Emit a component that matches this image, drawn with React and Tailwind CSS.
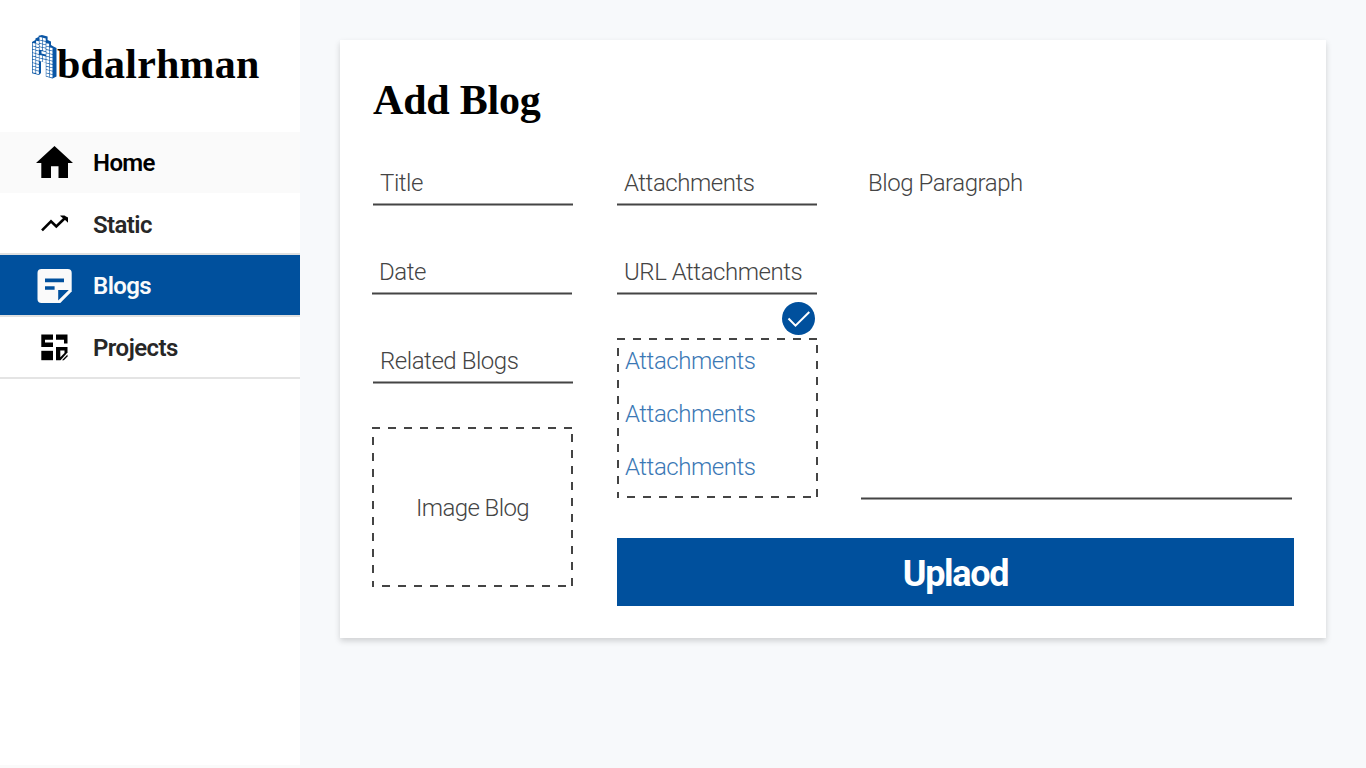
const LOGO_COLUMNS = [
  { x: 0.7, y: 8, rows: 9 },
  { x: 4.1, y: 5.7, rows: 10 },
  { x: 7.5, y: 2.0, rows: 4 },
  { x: 7.5, y: 20, rows: 2 },
  { x: 10.9, y: 2.8, rows: 4 },
  { x: 10.9, y: 20.8, rows: 2 },
  { x: 14.3, y: 8.2, rows: 10 },
  { x: 17.7, y: 12.4, rows: 9 },
];

function Logo() {
  return (
    <svg width="25" height="45" viewBox="0 0 25 45" fill="none">
      <path d="M0 7 3.400 5V3.400L6.600 2V.8L10 0 15.600 1.600V5L19 6.600V10L21 11.200 24.500 13V41.500L20.500 43.500 13.800 41.500V27.500L9 26.400V38L7 40 0 38.300Z" fill="#0a56a5" />
      <path d="M9.500 16 13.800 17V19.600L9.500 18.500Z" fill="#fff" />
      {LOGO_COLUMNS.map((c, i) =>
        Array.from({ length: c.rows }, (_, r) => (
          <path key={`${i}-${r}`} d={`M${c.x} ${c.y + r * 3.35}l2.800 .6v2.700l-2.800-.6z`} fill="#fff" />
        ))
      )}
    </svg>
  );
}

function HomeIcon() {
  return (
    <svg width="40" height="41" viewBox="35 142 40 41" fill="#000">
      <path d="M54.500 146 73 163H68V178H58.500V166.300H51V178H41.300V163H36Z" />
    </svg>
  );
}

function TrendIcon() {
  return (
    <svg width="40" height="40" viewBox="35 203 40 40" fill="none">
      <path d="M42 230.300 51 221.300 56.300 226.500 65 218" stroke="#000" strokeWidth="2.600" />
      <path d="M60.300 215.500H64.500L66 216.600 68 217.500V222.800L66.500 221.300 60.300 215.900Z" fill="#000" />
    </svg>
  );
}

function NoteIcon() {
  return (
    <svg width="40" height="40" viewBox="35 265 40 40" fill="none">
      <path d="M41.500 269H67.700a4 4 0 0 1 4 4V291.500L60.300 302.900H41.500a4 4 0 0 1-4-4V273a4 4 0 0 1 4-4Z" fill="#fafafa" />
      <path d="M45 278.500H64V282.200H45ZM45 286.200H54.600V289.800H45ZM58.200 290H68.800L58.200 300.600Z" fill="#00509d" />
    </svg>
  );
}

function ProjectsIcon() {
  return (
    <svg width="40" height="40" viewBox="35 327 40 40" fill="#000">
      <path d="M41.300 334.600H53V339.800H45V342.400H53V347H41.300Z" />
      <path d="M56 334.600H67.500V343.500H64V339.700H56Z" />
      <path d="M41.300 350.800H53V360.200H41.300Z" />
      <path d="M56 347H67.500V352.500L60.500 360.200H56Z" />
      <path d="M60.300 350.500H64.500V353L60.300 357.300Z" fill="#fff" />
      <path d="M62 360.200 67.500 354.600V356.500L63.800 360.200Z" />
    </svg>
  );
}

function Dashes() {
  return (
    <svg className="absolute inset-0" width="201" height="160" stroke="#444" strokeWidth="2" strokeDasharray="8 8">
      <path d="M0 1H200M200 7V159M10 159H200M1 10V160" />
    </svg>
  );
}

function Line({ className }) {
  return <div className={`h-[3px] border-y border-[#a0a0a0] bg-[#444] ${className}`} />;
}

function Field({ children, className = "" }) {
  return (
    <div className={`w-[200px] ${className}`}>
      <div className="flex h-[42px] items-center pl-[7px] pt-[2px]">{children}</div>
      <Line className="w-[200px]" />
    </div>
  );
}

function NavItem({ icon, label, className, labelClass = "" }) {
  return (
    <a className={`flex items-center pl-[35px] text-2xl font-semibold ${className}`}>
      <span className="flex w-[58px] shrink-0">{icon}</span>
      <span className={labelClass}>{label}</span>
    </a>
  );
}

export default function App() {
  return (
    <div className="h-[768px] w-[1366px] overflow-hidden bg-[#f7f9fb] font-['Roboto',sans-serif] text-[#444]">
      <div className="flex">
        <div className="h-[768px] w-[300px] shrink-0 bg-[#fafafa]">
          <aside className="h-[765px] bg-white text-[#272727]">
            <div className="flex h-[132px] pl-[32px] pt-[35px] text-black">
              <Logo />
              <span className="pt-[5px] font-['Liberation_Serif',serif] text-[42px] font-bold leading-[48px] tracking-[0.2px]">bdalrhman</span>
            </div>
            <NavItem label="Home" className="h-[61px] bg-[#fafafa] text-black" labelClass="tracking-[-0.6px]" icon={<HomeIcon />} />
            <NavItem label="Static" className="h-[62px] border-b-2 border-[#e0e0e0]" labelClass="pt-1 tracking-[-0.6px]" icon={<TrendIcon />} />
            <NavItem label="Blogs" className="h-[60px] bg-[#00509d] text-[#fafafa]" labelClass="pt-0.5 tracking-[-0.6px]" icon={<NoteIcon />} />
            <div className="h-[2px] bg-[#e0e0e0]" />
            <NavItem label="Projects" className="h-[62px] border-b-2 border-[#e4e4e4]" labelClass="pt-0.5 tracking-[-0.55px]" icon={<ProjectsIcon />} />
          </aside>
        </div>
        <main className="p-10">
          <section className="h-[598px] w-[986px] bg-white pl-8 pt-8 shadow-[0_3px_6px_rgba(0,0,0,0.16)]">
            <h1 className="h-[56px] pl-px font-['Liberation_Serif',serif] text-[42px] font-bold leading-[57px] tracking-[-0.2px] text-black">Add Blog</h1>
            <div className="flex gap-11 pt-[33px] text-2xl font-[350] tracking-[-0.45px]">
              <div className="flex w-[201px] flex-col gap-[44px]">
                <Field className="ml-px">Title</Field>
                <Field>Date</Field>
                <Field className="ml-px">Related Blogs</Field>
                <div className="relative -mt-px flex h-[160px] items-center justify-center pt-[2px] tracking-[-0.6px]">
                  <Dashes />
                  Image Blog
                </div>
              </div>
              <div className="w-[677px]">
                <div className="flex gap-[43px]">
                  <div className="w-[201px]">
                    <Field>Attachments</Field>
                    <Field className="mt-[44px]">URL Attachments</Field>
                    <div className="flex h-[43px] justify-end pr-[3px] pt-[7px]">
                      <svg width="33" height="33" viewBox="0 0 33 33" fill="none">
                        <circle cx="16.500" cy="16.500" r="16.500" fill="#00509d" />
                        <path d="M6.500 16.500 13.500 23.700 27.300 10" stroke="#fff" strokeWidth="2" />
                      </svg>
                    </div>
                    <div className="relative flex h-[160px] flex-col gap-[21px] pl-[8px] pt-[7px] text-[#3b78b5]">
                      <Dashes />
                      <span>Attachments</span>
                      <span>Attachments</span>
                      <span>Attachments</span>
                    </div>
                  </div>
                  <div className="flex w-[431px] flex-col justify-between">
                    <div className="flex h-[42px] items-center pl-[7px] pt-[2px]">Blog Paragraph</div>
                    <Line className="mb-[-2px] w-[431px]" />
                  </div>
                </div>
                <button className="mt-[40px] block h-[68px] w-[677px] bg-[#00509d] pt-[3px] text-4xl font-bold tracking-[-1.3px] text-white">Uplaod</button>
              </div>
            </div>
          </section>
        </main>
      </div>
    </div>
  );
}
